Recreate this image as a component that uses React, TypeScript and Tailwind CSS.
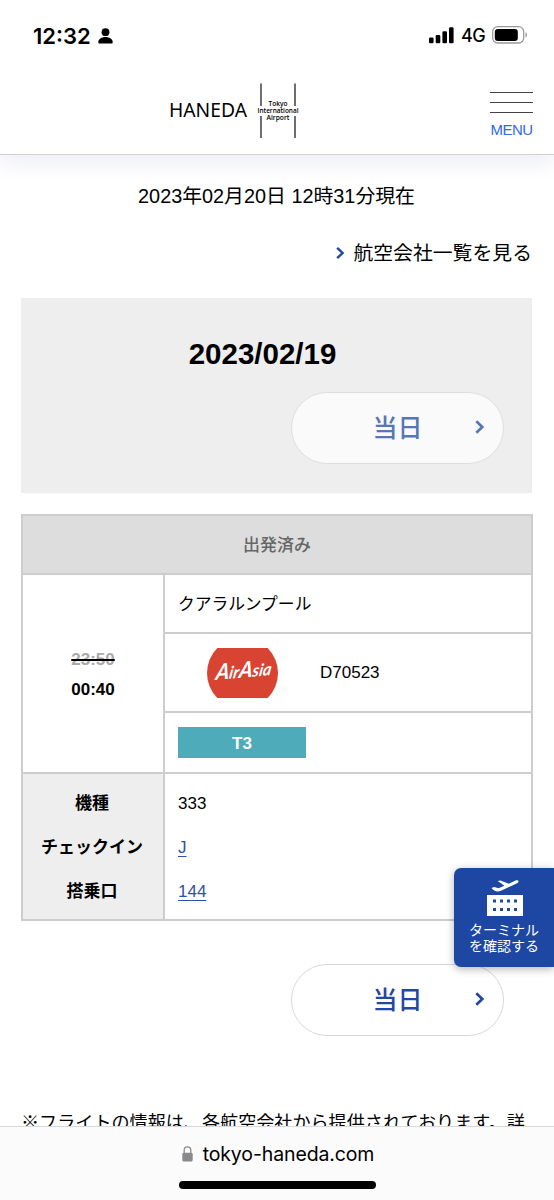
import React from "react";

const sans = "font-['Liberation_Sans','Noto_Sans_CJK_JP',sans-serif]";
const inter = "font-['Inter','Noto_Sans_CJK_JP',sans-serif]";

function StatusBar() {
  return (
    <div className={`flex h-[72px] items-center pl-[33px] pr-[26px] ${inter}`}>
      <span className="text-[22px] font-semibold leading-none text-black">12:32</span>
      <svg className="ml-[7px]" width="15" height="16" viewBox="0 0 15 16">
        <circle cx="7.5" cy="4.2" r="3.9" />
        <path d="M0.3 14.2C0.3 11.3 3.5 9.1 7.5 9.1s7.2 2.2 7.2 5.1c0 .9-.5 1.3-1.3 1.3H1.6C.8 15.500.3 15.100.3 14.200Z" />
      </svg>
      <div className="ml-auto flex items-center pb-[2px]">
        <svg width="25" height="17" viewBox="0 0 25 17">
          <rect x="0" y="10.500" width="4.600" height="5.800" rx="1.300" />
          <rect x="6.700" y="8" width="4.600" height="8.300" rx="1.300" />
          <rect x="13.400" y="4.200" width="4.600" height="12.100" rx="1.300" />
          <rect x="20" y="0.300" width="4.600" height="16" rx="1.300" />
        </svg>
        <span className="ml-[7px] w-[24px] pt-[2px] text-[18px] font-medium leading-none tracking-[-0.6px] text-black">4G</span>
        <svg className="ml-[7px]" width="36" height="18" viewBox="0 0 36 18">
          <rect x="0.700" y="0.700" width="31" height="16.300" rx="5" fill="none" stroke="#9b9b9b" strokeWidth="1.300" />
          <rect x="2.800" y="2.900" width="23" height="12" rx="3" />
          <path d="M33.500 6.200c2 .5 2 4.800 0 5.400Z" fill="#9b9b9b" />
        </svg>
      </div>
    </div>
  );
}

function HanedaLogo() {
  return (
    <svg width="132" height="56" viewBox="0 0 132 56" className="text-black">
      <text x="1" y="34.200" fontFamily="'Noto Sans', sans-serif" fontSize="19.500" textLength="78" lengthAdjust="spacingAndGlyphs">
        HANEDA
      </text>
      <g stroke="#222" strokeWidth="1.300">
        <path d="M93 .5V23M93 33V55M127 .5V23M127 33V55" />
      </g>
      <g fontFamily="'Open Sans', sans-serif" fontWeight="600" fontSize="6.500" textAnchor="middle">
        <text x="110" y="23.200" textLength="19" lengthAdjust="spacingAndGlyphs">Tokyo</text>
        <text x="110" y="30" textLength="41" lengthAdjust="spacingAndGlyphs">International</text>
        <text x="110" y="36.800" textLength="23" lengthAdjust="spacingAndGlyphs">Airport</text>
      </g>
    </svg>
  );
}

function Header() {
  return (
    <header className="relative z-10 h-[155px] border-b border-[#d2d2d4] bg-white shadow-[0_8px_22px_rgba(70,80,160,0.1)]">
      <StatusBar />
      <div className="grid grid-cols-[168px_1fr_64px] items-start">
        <div className="col-start-2 mt-[11px]">
          <HanedaLogo />
        </div>
        <button className={`col-start-3 mt-[20px] flex w-[43px] flex-col ${sans}`}>
          <span className="mb-[9px] h-px w-full bg-[#444]" />
          <span className="mb-[9px] h-px w-full bg-[#444]" />
          <span className="h-px w-full bg-[#444]" />
          <span className="mt-[8px] self-center text-[15px] leading-[18px] tracking-[-0.5px] text-[#2f6ae6]">MENU</span>
        </button>
      </div>
    </header>
  );
}

function Chevron({ className }: { className?: string }) {
  return (
    <svg className={className} width="10" height="14" viewBox="0 0 10 14" fill="none" stroke="currentColor" strokeWidth="2.700">
      <path d="M1.300 1.200 7.300 7l-6 5.800" />
    </svg>
  );
}

function DayButton({ faded }: { faded?: boolean }) {
  return (
    <button
      className={`grid h-[72px] w-[213px] grid-cols-[1fr_auto_1fr] items-center rounded-full border-[1.500px] ${
        faded ? "border-[#dfdfdf] bg-[#fafafa] text-[#5676b8]" : "border-[#d8d8d8] bg-white text-[#1f47a3]"
      }`}
    >
      <span className="col-start-2 text-[25px] font-medium leading-[36px]">当日</span>
      <Chevron className="mb-[2px] mr-[18px] justify-self-end" />
    </button>
  );
}

function AirAsiaLogo() {
  return (
    <svg width="71" height="50" viewBox="0 0 71 50">
      <path d="M10.300 0H60.700A35.500 35.500 0 0 1 60.700 50H10.300A35.500 35.500 0 0 1 10.300 0Z" fill="#d94331" />
      <text
        transform="translate(8 32) rotate(-5) skewX(-14)"
        fontFamily="Lato, sans-serif"
        fontStyle="italic"
        fontWeight="700"
        fontSize="17"
        fill="#fff"
        textLength="56"
        lengthAdjust="spacingAndGlyphs"
      >
        <tspan fontSize="22">A</tspan>ir<tspan fontSize="22">A</tspan>sia
      </text>
    </svg>
  );
}

function FlightTable() {
  return (
    <section className="mt-[21px] grid w-[512px] grid-cols-[140px_1fr] grid-rows-[57px_57px_77px_59px_145px] gap-[2px] bg-[#cdcdcd] p-[2px] text-[17px] leading-[24px]">
      <div className="col-span-2 flex items-center justify-center bg-[#dddddd] pt-[2px] font-medium text-[#666]">出発済み</div>
      <div className="row-span-3 flex flex-col items-center justify-center bg-white pt-[2px] font-bold leading-[30px]">
        <span className="text-[#aaa] line-through decoration-black decoration-[1.500px]">23:50</span>
        <span>00:40</span>
      </div>
      <div className="flex items-center bg-white pl-[13px] pt-[2px] text-[16.800px]">クアラルンプール</div>
      <div className="flex items-center bg-white pl-[42px]">
        <AirAsiaLogo />
        <span className="ml-[42px]">D70523</span>
      </div>
      <div className="flex items-center bg-white pl-[13px]">
        <span className="flex h-[31px] w-[128px] items-center justify-center bg-[#4eabb9] pt-[2px] font-bold text-white">T3</span>
      </div>
      <div className="flex flex-col items-center bg-[#eeeeee] pr-[2px] pt-[8px] font-bold leading-[44px]">
        <span>機種</span>
        <span>チェックイン</span>
        <span>搭乗口</span>
      </div>
      <div className="flex flex-col items-start bg-white pl-[13px] pt-[8px] leading-[44px]">
        <span>333</span>
        <a className="text-[#2f50ab] underline underline-offset-[3px]">J</a>
        <a className="text-[#2f50ab] underline underline-offset-[3px]">144</a>
      </div>
    </section>
  );
}

function TerminalButton() {
  return (
    <button className="absolute right-0 top-[868px] z-20 flex h-[99px] w-[100px] flex-col items-center rounded-l-[7px] bg-[#1e47a4] pt-[11px] text-[14px] leading-[16px] text-white shadow-[0_2px_8px_rgba(0,0,0,0.3)]">
      <svg className="ml-[2px]" width="38" height="38" viewBox="0 0 38 38" fill="#fff">
        <path d="M5.500 9 8.200 8 12.500 9.300 18.500 6.800 11.700 2 14.400 1.400 22.800 4.700 29 1.800C31 1 32.300 1.300 32.500 2.300C32.600 3.300 31.600 4.100 30 4.800L15 11.700C11.500 13.100 9.300 13 5.500 9Z" />
        <path fillRule="evenodd" d="M1 16H37V37H1ZM7 20.500V23.500H10V20.500ZM14 20.500V23.500H17V20.500ZM21 20.500V23.500H24V20.500ZM28 20.500V23.500H31V20.500ZM7 29V32H10V29ZM14 29V32H17V29ZM21 29V32H24V29ZM28 29V32H31V29Z" />
      </svg>
      <span className="mt-[5px]">ターミナル</span>
      <span>を確認する</span>
    </button>
  );
}

function BrowserBar() {
  return (
    <footer className={`absolute inset-x-0 bottom-0 z-30 flex h-[74px] flex-col items-center border-t border-[#d9d9dc] bg-[#fbfbfc] ${inter}`}>
      <div className="mt-[14px] flex items-center pl-[2px]">
        <svg width="11" height="16" viewBox="0 0 11 16">
          <path d="M2.200 7V4.200a3.300 3.300 0 0 1 6.600 0V7" fill="none" stroke="#8a8a8d" strokeWidth="1.300" />
          <rect x="0.300" y="6.700" width="10.400" height="8.800" rx="1.500" fill="#8a8a8d" />
        </svg>
        <span className="ml-[10px] text-[19.500px] leading-[26px] tracking-[-0.12px] text-black">tokyo-haneda.com</span>
      </div>
      <div className="mt-[14px] h-[8px] w-[197px] rounded-full bg-black" />
    </footer>
  );
}

export default function App() {
  return (
    <div lang="ja" className={`relative h-[1200px] w-[554px] overflow-hidden bg-white text-black ${sans}`}>
      <Header />
      <main className="pl-[21px] pr-[22px]">
        <p className="mt-[26px] text-center text-[19.850px] leading-[30px]">2023年02月20日 12時31分現在</p>
        <a className="mt-[27px] flex items-center justify-end text-[19.850px] leading-[30px]">
          <Chevron className="mr-[8px] w-[9px] text-[#2347a5]" />
          航空会社一覧を見る
        </a>
        <section className="mt-[30px] flex h-[195px] flex-col bg-[#eeeeee] pt-[36px]">
          <h2 className="pr-[28px] text-center text-[29.500px] font-bold leading-[40px]">2023/02/19</h2>
          <div className="mt-[18px] flex justify-end pr-[28px]">
            <DayButton faded />
          </div>
        </section>
        <FlightTable />
        <div className="mt-[43px] flex justify-end pr-[28px]">
          <DayButton />
        </div>
        <p className="mt-[73px] whitespace-nowrap text-[18.100px] leading-[28px]">
          ※フライトの情報は、各航空会社から提供されております。詳
        </p>
      </main>
      <TerminalButton />
      <BrowserBar />
    </div>
  );
}
